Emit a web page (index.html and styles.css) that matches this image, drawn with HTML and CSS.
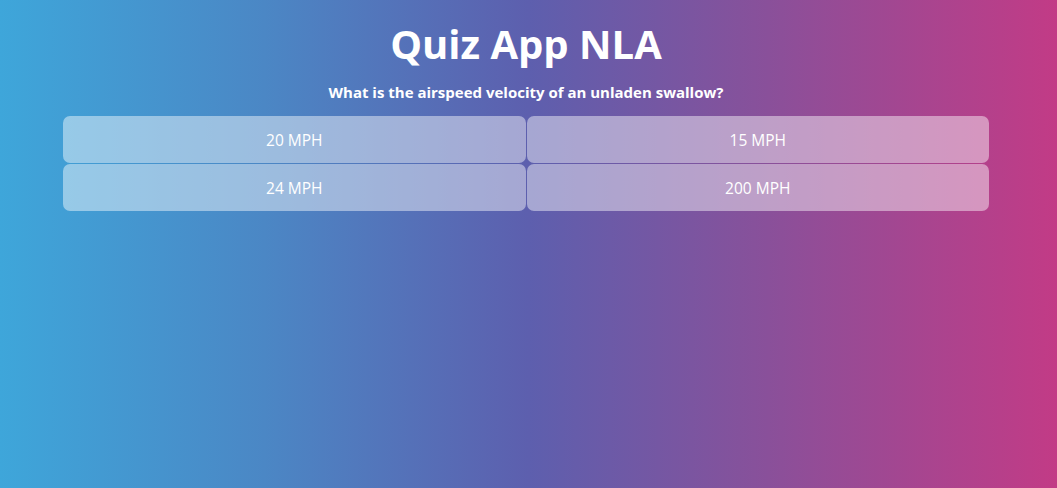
FILE: index.html
```html
<!DOCTYPE html>
<html lang="en">
<head>
<meta charset="utf-8">
<title>Quiz App NLA</title>
<link rel="stylesheet" href="styles.css">
</head>
<body>
<main class="app">
  <h1 class="title">Quiz App NLA</h1>
  <p class="question">What is the airspeed velocity of an unladen swallow?</p>
  <div class="answers">
    <button class="answer">20 MPH</button>
    <button class="answer">15 MPH</button>
    <button class="answer">24 MPH</button>
    <button class="answer">200 MPH</button>
  </div>
</main>
</body>
</html>
```
FILE: styles.css
```css
html, body {
  margin: 0;
  height: 100%;
}
body {
  box-sizing: border-box;
  padding-right: 5px;
  background: linear-gradient(to right, #3ea6da 0%, #4b87c5 25%, #5d5fae 50%, #84529c 70%, #c23b86 100%);
  font-family: "Open Sans", "Noto Sans", sans-serif;
  color: #fff;
}
.app {
  width: 926px;
  margin: 0 auto;
  padding-top: 17px;
  display: flex;
  flex-direction: column;
  align-items: center;
}
.title {
  margin: 0;
  font-size: 40px;
  line-height: 54px;
  font-weight: 700;
}
.question {
  margin: 11px 0 14px;
  font-size: 15px;
  line-height: 20px;
  font-weight: 700;
}
.answers {
  width: 100%;
  display: grid;
  grid-template-columns: 1fr 1fr;
  column-gap: 1px;
  row-gap: 1px;
}
.answer {
  height: 47px;
  border: none;
  border-radius: 7px;
  background: rgba(255, 255, 255, 0.45);
  color: #fff;
  font-family: inherit;
  font-size: 15.5px;
  cursor: pointer;
}
```
